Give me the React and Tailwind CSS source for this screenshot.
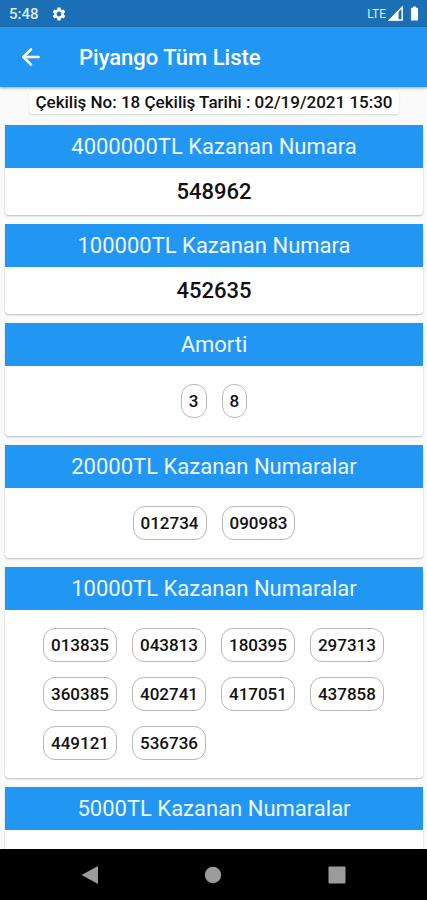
import { ArrowLeft } from "lucide-react";
import { MdBatteryFull, MdSettings } from "react-icons/md";

const draw = { no: 18, date: "02/19/2021 15:30" };

const prizes = [
    { title: "4000000TL Kazanan Numara", winner: "548962" },
    { title: "100000TL Kazanan Numara", winner: "452635" },
    { title: "Amorti", numbers: ["3", "8"] },
    { title: "20000TL Kazanan Numaralar", numbers: ["012734", "090983"] },
    {
        title: "10000TL Kazanan Numaralar",
        numbers: [
            "013835", "043813", "180395", "297313", "360385",
            "402741", "417051", "437858", "449121", "536736",
        ],
    },
    { title: "5000TL Kazanan Numaralar", numbers: [] },
];

function StatusBar() {
    return (
        <div className="flex h-[27px] shrink-0 items-center justify-between bg-[#1a6fb5] pr-1 pl-[9px] text-white">
            <div className="flex items-center gap-3">
                <span className="text-[15px] leading-5 font-medium text-[#dcebf8]">5:48</span>
                <MdSettings className="size-4" />
            </div>
            <div className="flex items-center">
                <span className="text-[12px] leading-5 text-[#dcebf8]">LTE</span>
                <svg className="ml-[2px] size-[15px]" viewBox="0 0 15 15" aria-hidden="true">
                    <path d="M14.2 1.2V14H1.4z" fill="none" stroke="currentColor" strokeWidth="1.4" />
                    <path d="M10.500 4.500v9.900H.6z" fill="currentColor" />
                </svg>
                <MdBatteryFull className="ml-[3px] size-[17px]" />
            </div>
        </div>
    );
}

function AppBar() {
    return (
        <header className="z-10 flex h-[60px] shrink-0 items-center bg-[#2196f3] px-[18px] text-white shadow-[0_1px_3px_rgba(0,0,0,0.35)]">
            <button type="button" aria-label="Geri" className="mr-[35px]">
                <ArrowLeft className="size-[26px]" strokeWidth={2.3} />
            </button>
            <h1 className="pt-[2px] text-[22px] leading-7 font-medium">Piyango Tüm Liste</h1>
        </header>
    );
}

function PrizeCard({ prize }) {
    return (
        <section className="rounded bg-white shadow-[0_1px_2px_rgba(0,0,0,0.25)]">
            <h2 className="bg-[#2196f3] text-center text-[22px] leading-[43px] text-[#eef6fe]">
                {prize.title}
            </h2>
            {prize.winner ? (
                <p className="text-center text-[22px] leading-[47px] font-medium">{prize.winner}</p>
            ) : (
                <div className="flex justify-center px-8 py-[18px]">
                    <ul className="flex max-w-[342px] flex-wrap gap-[15px]">
                        {prize.numbers.map((number) => (
                            <li
                                key={number}
                                className="rounded-xl border border-[#b8b8b8] px-[7px] text-[17px] leading-8 font-medium"
                            >
                                {number}
                            </li>
                        ))}
                    </ul>
                </div>
            )}
        </section>
    );
}

function NavigationBar() {
    return (
        <nav className="flex h-[51px] shrink-0 items-center justify-around bg-black px-7 text-[#9b9b9b]">
            <button type="button" aria-label="Geri">
                <svg className="size-5" viewBox="0 0 20 20">
                    <path d="M18 1v18L1.500 10z" fill="currentColor" />
                </svg>
            </button>
            <button type="button" aria-label="Ana ekran">
                <svg className="size-5" viewBox="0 0 20 20">
                    <circle cx="10" cy="10" r="8.200" fill="currentColor" />
                </svg>
            </button>
            <button type="button" aria-label="Son uygulamalar">
                <svg className="size-5" viewBox="0 0 20 20">
                    <rect x="1.500" y="1.500" width="17" height="17" rx="1" fill="currentColor" />
                </svg>
            </button>
        </nav>
    );
}

export default function App() {
    return (
        <div className="flex h-screen flex-col bg-[#fafafa] font-['Roboto',sans-serif] text-[#111111]">
            <StatusBar />
            <AppBar />
            <main className="flex-1 overflow-y-auto pt-[3px] pr-1 pl-[5px] [scrollbar-width:none]">
                <p className="mx-auto mb-[11px] w-fit rounded bg-white px-[6px] text-[17px] leading-6 font-medium whitespace-nowrap shadow-[0_1px_2px_rgba(0,0,0,0.15)]">
                    Çekiliş No: {draw.no} Çekiliş Tarihi : {draw.date}
                </p>
                <div className="flex flex-col gap-[9px]">
                    {prizes.map((prize) => (
                        <PrizeCard key={prize.title} prize={prize} />
                    ))}
                </div>
            </main>
            <NavigationBar />
        </div>
    );
}
